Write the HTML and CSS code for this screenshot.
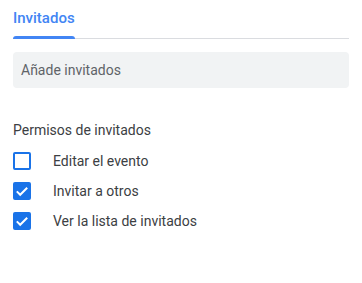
FILE: index.html
```html
<!DOCTYPE html>
<html lang="es">
<head>
<meta charset="utf-8">
<link rel="stylesheet" href="styles.css">
</head>
<body>
<div class="page">
  <div class="tabbar">
    <div class="tab">Invitados</div>
  </div>
  <div class="guest-input">Añade invitados</div>
  <div class="perm-title">Permisos de invitados</div>
  <ul class="perms">
    <li class="perm">
      <span class="box"></span>
      <span class="label">Editar el evento</span>
    </li>
    <li class="perm">
      <span class="box checked"><svg viewBox="0 0 18 18" width="18" height="18"><polyline points="3.8,9.4 7.2,12.8 14.2,5.8" fill="none" stroke="#fff" stroke-width="2"/></svg></span>
      <span class="label">Invitar a otros</span>
    </li>
    <li class="perm">
      <span class="box checked"><svg viewBox="0 0 18 18" width="18" height="18"><polyline points="3.8,9.4 7.2,12.8 14.2,5.8" fill="none" stroke="#fff" stroke-width="2"/></svg></span>
      <span class="label">Ver la lista de invitados</span>
    </li>
  </ul>
</div>
</body>
</html>
```
FILE: styles.css
```css
html, body {
  margin: 0;
  padding: 0;
  background: #fff;
}
body {
  font-family: Roboto, "Liberation Sans", Arial, sans-serif;
  font-size: 14px;
  line-height: 20px;
  color: #3c4043;
}
.page {
  padding: 0 13px;
}
.tabbar {
  display: flex;
  border-bottom: 1px solid #dadce0;
}
.tab {
  position: relative;
  padding: 8px 0 10px;
  font-size: 15px;
  font-weight: 500;
  color: #4285f4;
}
.tab::after {
  content: "";
  position: absolute;
  left: 0;
  right: 0;
  bottom: -1px;
  height: 3px;
  background: #4285f4;
  border-radius: 3px 3px 0 0;
}
.guest-input {
  margin-top: 13px;
  height: 20px;
  padding: 8px 8px;
  background: #f1f3f4;
  border-radius: 4px;
  color: #5f6368;
}
.perm-title {
  margin-top: 32px;
}
.perms {
  list-style: none;
  margin: 6px 0 0;
  padding: 0;
}
.perm {
  display: flex;
  align-items: center;
  height: 30px;
  gap: 22px;
}
.box {
  box-sizing: border-box;
  width: 18px;
  height: 18px;
  border: 2px solid #1a73e8;
  border-radius: 2px;
  flex: none;
  position: relative;
}
.box.checked {
  background: #1a73e8;
  border: none;
}
.box svg {
  display: block;
}
```
